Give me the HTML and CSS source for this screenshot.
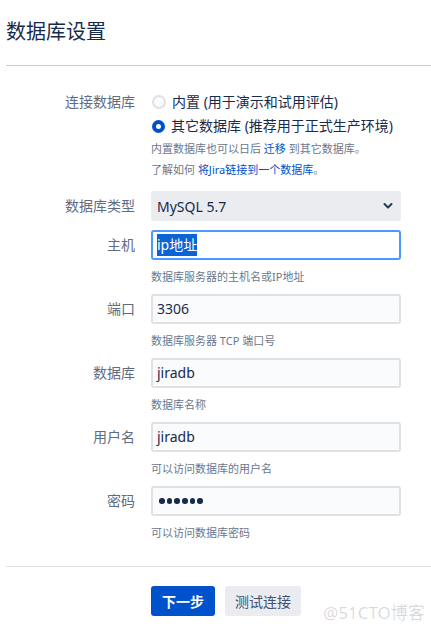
FILE: index.html
```html
<!DOCTYPE html>
<html lang="zh-CN">
<head>
    <meta charset="UTF-8">
    <meta name="viewport" content="width=device-width, initial-scale=1.0">
    <title>数据库设置</title>
    <link rel="stylesheet" href="styles.css">
</head>
<body>
    <h1 class="title">数据库设置</h1>
    <hr class="divider">
    <form class="setup-form">
        <div class="row radio-row">
            <span class="field-label">连接数据库</span>
            <div class="field">
                <label class="radio"><span class="radio-dot"></span>内置 (用于演示和试用评估)</label>
                <label class="radio"><span class="radio-dot checked"></span>其它数据库 (推荐用于正式生产环境)</label>
                <p class="note">内置数据库也可以日后 <a href="#">迁移</a> 到其它数据库。</p>
                <p class="note">了解如何 <a href="#">将Jira链接到一个数据库</a>。</p>
            </div>
        </div>

        <div class="row">
            <span class="field-label">数据库类型</span>
            <div class="field">
                <div class="select">
                    <span>MySQL 5.7</span>
                    <svg class="chevron" width="10" height="8" viewBox="0 0 10 8">
                        <path d="M1.5 2 L5 5.5 L8.5 2" fill="none" stroke="#253858" stroke-width="2" stroke-linecap="round" stroke-linejoin="round"/>
                    </svg>
                </div>
            </div>
        </div>

        <div class="row">
            <span class="field-label">主机</span>
            <div class="field">
                <div class="text-input focused"><span class="selected">ip地址</span></div>
                <p class="help">数据库服务器的主机名或IP地址</p>
            </div>
        </div>

        <div class="row">
            <span class="field-label">端口</span>
            <div class="field">
                <div class="text-input">3306</div>
                <p class="help">数据库服务器 TCP 端口号</p>
            </div>
        </div>

        <div class="row">
            <span class="field-label">数据库</span>
            <div class="field">
                <div class="text-input">jiradb</div>
                <p class="help">数据库名称</p>
            </div>
        </div>

        <div class="row">
            <span class="field-label">用户名</span>
            <div class="field">
                <div class="text-input">jiradb</div>
                <p class="help">可以访问数据库的用户名</p>
            </div>
        </div>

        <div class="row">
            <span class="field-label">密码</span>
            <div class="field">
                <div class="text-input password">
                    <i></i><i></i><i></i><i></i><i></i><i></i>
                </div>
                <p class="help">可以访问数据库密码</p>
            </div>
        </div>
    </form>
    <hr class="divider bottom">
    <div class="actions">
        <button type="button" class="btn primary">下一步</button>
        <button type="button" class="btn">测试连接</button>
    </div>
    <span class="watermark">@51CTO博客</span>
</body>
</html>
```

FILE: styles.css
```css
body {
    font-family: "Noto Sans", "Noto Sans CJK SC", sans-serif;
    margin: 0;
    padding: 0 0 0 6px;
    background-color: #fff;
    color: #172b4d;
    position: relative;
    height: 631px;
    box-sizing: border-box;
}
.title {
    margin: 0;
    padding-top: 18px;
    font-size: 20px;
    line-height: 28px;
    font-weight: normal;
}
.divider {
    border: 0;
    border-top: 1px solid #c9ced6;
    height: 0;
    margin: 19px 0 0;
}
.divider.bottom {
    border-top-color: #dfe1e6;
    margin-top: 25px;
}
.setup-form {
    padding-top: 24px;
}
.row {
    display: grid;
    grid-template-columns: 129px 250px;
    column-gap: 16px;
    margin-bottom: 9px;
}
.field-label {
    text-align: right;
    font-size: 14px;
    line-height: 30px;
    color: #5e6c84;
}
.radio-row {
    margin-bottom: 11px;
}
.radio-row .field-label {
    line-height: 24px;
}
.radio {
    display: flex;
    align-items: center;
    font-size: 14px;
    line-height: 24px;
    color: #172b4d;
}
.radio-dot {
    width: 10px;
    height: 10px;
    border: 2px solid #dfe1e6;
    border-radius: 50%;
    background: #fafbfc;
    margin: 0 6px 0 1px;
}
.radio-dot.checked {
    width: 5px;
    height: 5px;
    border: 4.5px solid #0052cc;
    background: #fff;
}
.note {
    margin: 0;
    font-size: 11px;
    line-height: 21px;
    color: #6b778c;
}
.note a {
    color: #0052cc;
    text-decoration: none;
}
.select {
    height: 30px;
    background: #ebecf0;
    border-radius: 3px;
    display: flex;
    align-items: center;
    justify-content: space-between;
    padding: 0 8px 0 6px;
    font-size: 14px;
    color: #172b4d;
}
.text-input {
    height: 30px;
    box-sizing: border-box;
    border: 2px solid #dfe1e6;
    background: #fafbfc;
    border-radius: 3px;
    padding: 0 4px;
    font-size: 14px;
    line-height: 26px;
    color: #172b4d;
}
.text-input.focused {
    border-color: #4c9aff;
    background: #fff;
    padding-top: 2px;
    line-height: 22px;
}
.selected {
    display: inline-block;
    background: #0a64d6;
    color: #fff;
}
.password {
    display: flex;
    align-items: center;
    gap: 2.2px;
    padding-left: 6px;
}
.password i {
    width: 5.5px;
    height: 5.5px;
    border-radius: 50%;
    background: #172b4d;
}
.help {
    margin: 9px 0 0;
    font-size: 11px;
    line-height: 16px;
    color: #6b778c;
}
.actions {
    display: flex;
    gap: 10px;
    margin: 19px 0 0 145px;
}
.btn {
    height: 30px;
    padding: 0 10px;
    border: none;
    border-radius: 3px;
    font-family: inherit;
    font-size: 14px;
    background: #ebecf0;
    color: #42526e;
    cursor: pointer;
}
.btn.primary {
    width: 64px;
    background: #0052cc;
    color: #fff;
    font-weight: bold;
}
.watermark {
    position: absolute;
    left: 323px;
    top: 603px;
    font-size: 17px;
    line-height: 20px;
    color: rgba(0, 0, 0, 0.16);
}
```
